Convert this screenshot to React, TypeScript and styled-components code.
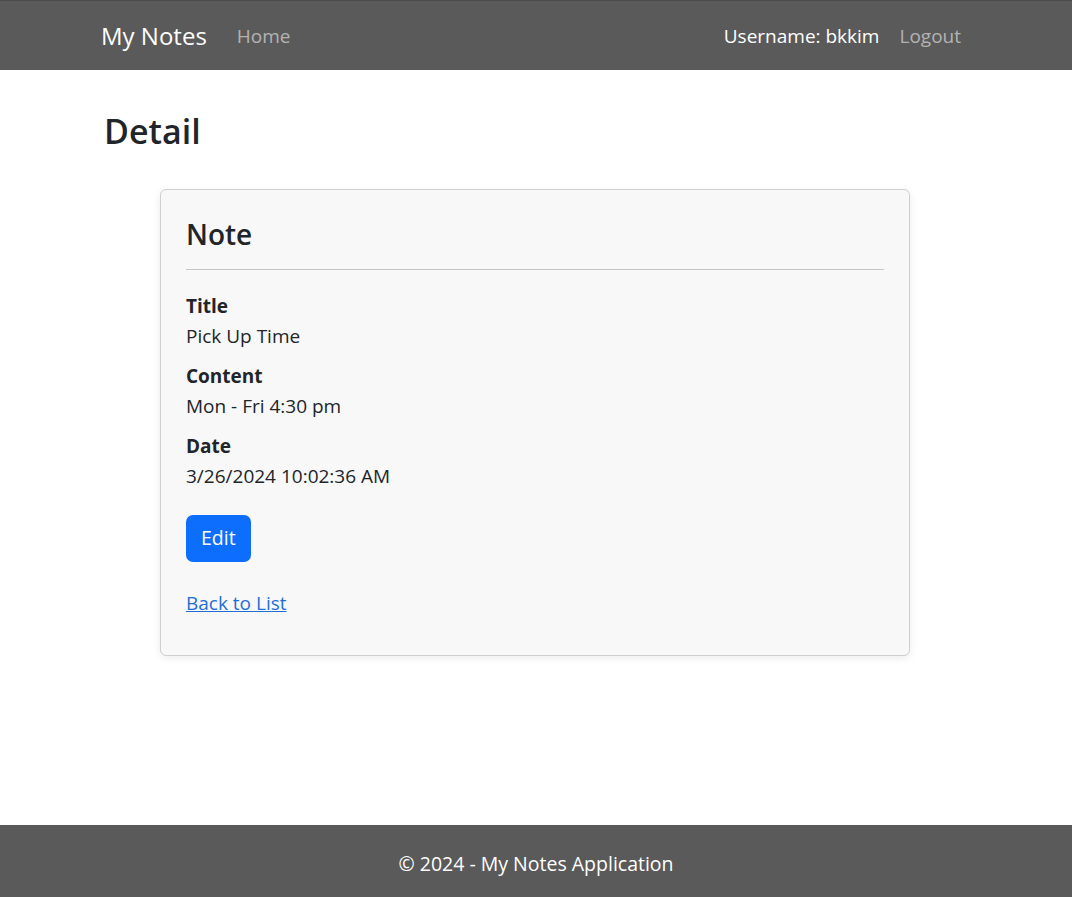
import React from "react";
import styled, { createGlobalStyle } from "styled-components";

const GlobalStyle = createGlobalStyle`
  html, body {
    margin: 0;
    padding: 0;
  }
  body {
    font-family: "Segoe UI", "Open Sans", "Noto Sans", sans-serif;
    font-size: 19px;
    line-height: 30px;
    color: #212529;
    background: #fff;
  }
  * {
    box-sizing: border-box;
  }
`;

const Page = styled.div`
  min-height: 100vh;
  display: flex;
  flex-direction: column;
`;

const NavBar = styled.nav`
  height: 70px;
  background: #5a5a5a;
  border-top: 1px solid #4a4a4a;
  display: flex;
  justify-content: center;
`;

const NavInner = styled.div`
  width: 900px;
  padding: 0 15px;
  display: flex;
  align-items: center;
`;

const Brand = styled.a`
  font-size: 24px;
  line-height: 37px;
  color: #fff;
  text-decoration: none;
  margin-right: 20px;
`;

const NavLink = styled.a<{ active?: boolean }>`
  padding: 0 10px;
  color: ${(props) => (props.active ? "#fff" : "rgba(255, 255, 255, 0.55)")};
  text-decoration: none;
`;

const NavRight = styled.div`
  margin-left: auto;
  display: flex;
  align-items: center;
`;

const Main = styled.main`
  flex: 1;
  width: 900px;
  margin: 0 auto;
  padding: 40px 15px 20px;
`;

const H1 = styled.h1`
  margin: 0 0 36px 3px;
  font-size: 34px;
  line-height: 43px;
  font-weight: 600;
`;

const Card = styled.div`
  width: 750px;
  margin-left: 59px;
  padding: 25px;
  background: #f8f8f8;
  border: 1px solid #cfcfcf;
  border-radius: 6px;
  box-shadow: 0 2px 8px rgba(0, 0, 0, 0.08);
`;

const CardTitle = styled.h2`
  margin: 0 0 16px;
  font-size: 28px;
  line-height: 38px;
  font-weight: 600;
`;

const Divider = styled.hr`
  margin: 0 0 21px;
  border: none;
  border-top: 1px solid #c6c6c6;
`;

const DefList = styled.dl`
  margin: 0 0 24px;
`;

const Term = styled.dt`
  font-weight: 700;
`;

const Value = styled.dd`
  margin: 0 0 10px;
`;

const Button = styled.button`
  font-family: inherit;
  font-size: 19.5px;
  line-height: 30px;
  padding: 8px 15px 9px;
  height: 47px;
  color: #fff;
  background: #0d6efd;
  border: none;
  border-radius: 7px;
  cursor: pointer;
`;

const BackLink = styled.a`
  display: inline-block;
  margin: 26px 0 12px;
  color: #1f6fd6;
  text-decoration: underline;
`;

const Footer = styled.footer`
  height: 72px;
  background: #5a5a5a;
  color: #fff;
  font-size: 19.5px;
  display: flex;
  align-items: center;
  justify-content: center;
  padding-top: 5px;
`;

export default function App() {
  return (
    <Page>
      <GlobalStyle />
      <NavBar>
        <NavInner>
          <Brand href="#">My Notes</Brand>
          <NavLink href="#">Home</NavLink>
          <NavRight>
            <NavLink active>Username: bkkim</NavLink>
            <NavLink href="#">Logout</NavLink>
          </NavRight>
        </NavInner>
      </NavBar>
      <Main>
        <H1>Detail</H1>
        <Card>
          <CardTitle>Note</CardTitle>
          <Divider />
          <DefList>
            <Term>Title</Term>
            <Value>Pick Up Time</Value>
            <Term>Content</Term>
            <Value>Mon - Fri 4:30 pm</Value>
            <Term>Date</Term>
            <Value>3/26/2024 10:02:36 AM</Value>
          </DefList>
          <Button>Edit</Button>
          <div>
            <BackLink href="#">Back to List</BackLink>
          </div>
        </Card>
      </Main>
      <Footer>© 2024 - My Notes Application</Footer>
    </Page>
  );
}
